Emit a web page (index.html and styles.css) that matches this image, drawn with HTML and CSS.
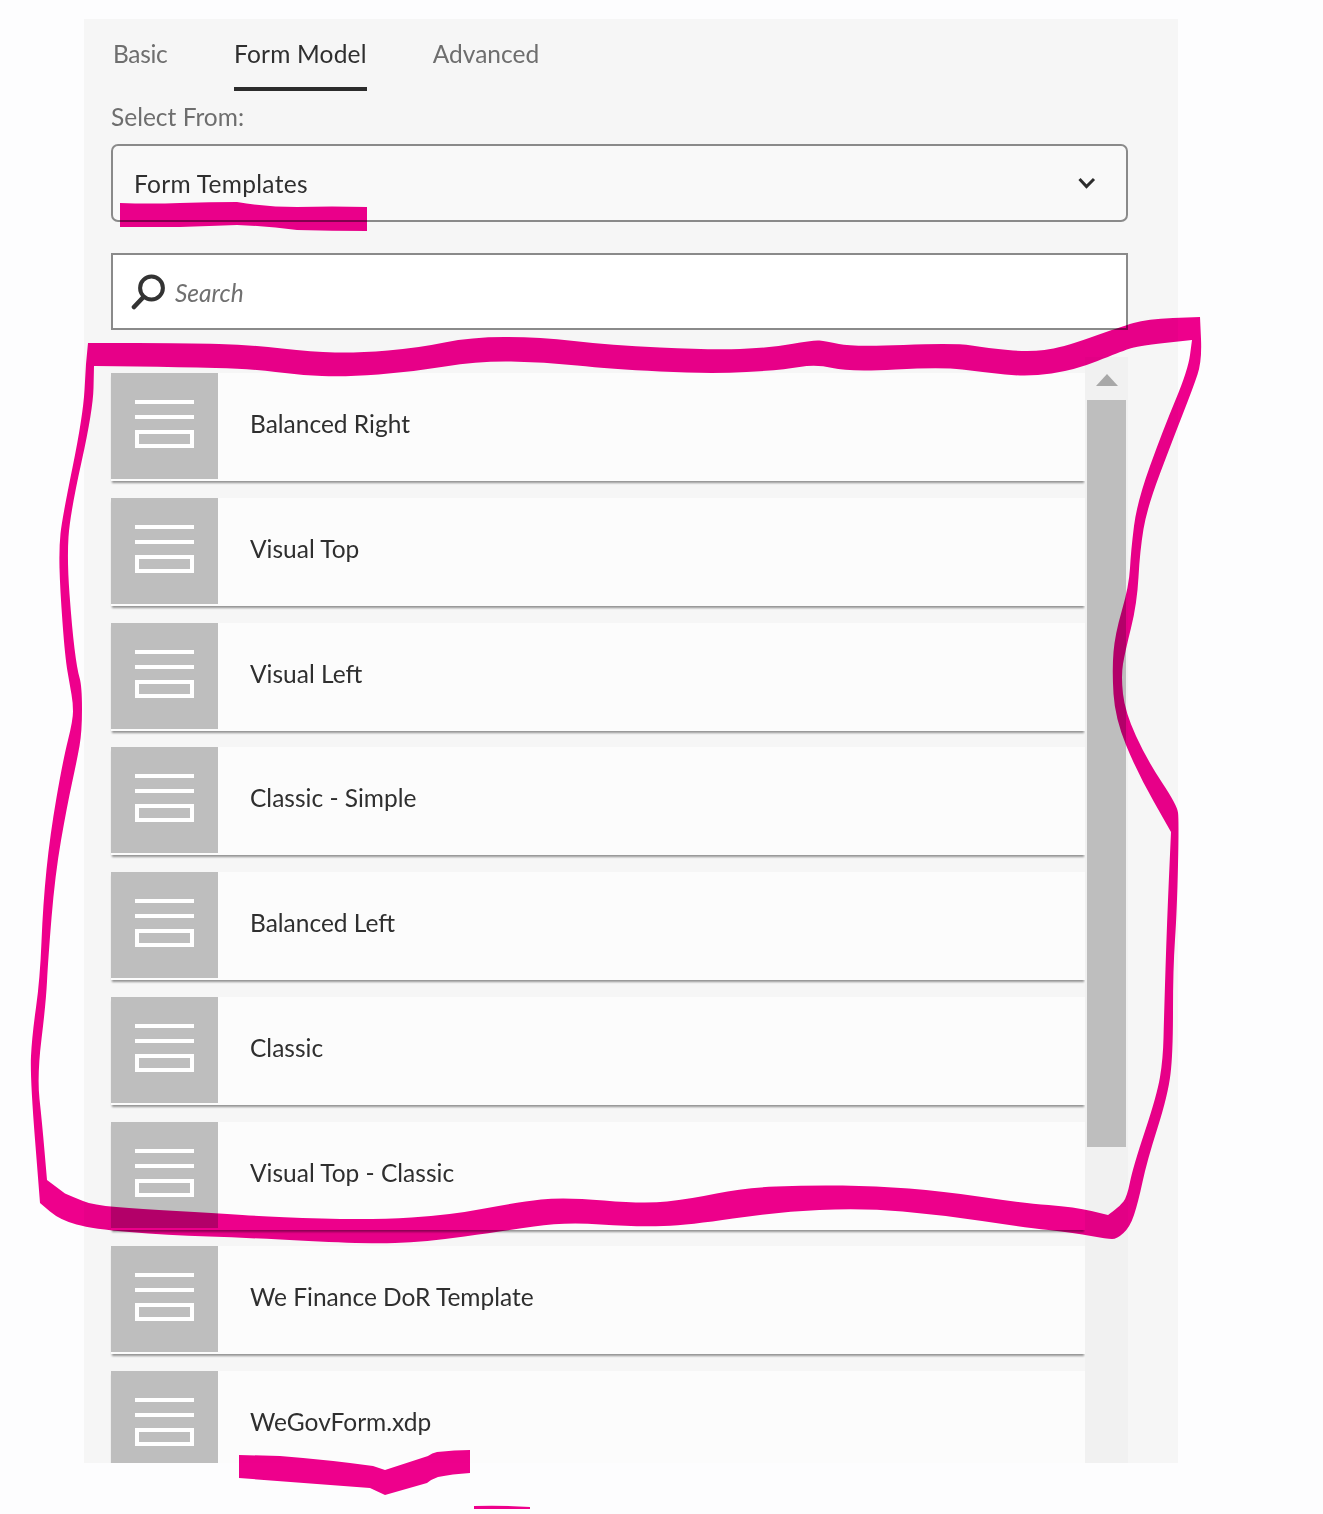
FILE: index.html
```html
<!DOCTYPE html>
<html lang="en">
<head>
<meta charset="utf-8">
<title>Form Model</title>
<link rel="stylesheet" href="styles.css">
</head>
<body>
<svg class="defs" width="0" height="0" aria-hidden="true">
  <symbol id="tpl" viewBox="0 0 107 106">
    <path d="M24 29H83M24 44H83" fill="none" stroke="#fff" stroke-width="4"/>
    <rect x="26" y="59" width="55" height="14" fill="none" stroke="#fff" stroke-width="4"/>
  </symbol>
</svg>
<main class="panel">
  <nav class="tabs">
    <span class="tab tab-basic">Basic</span>
    <span class="tab tab-active">Form Model</span>
    <span class="tab tab-adv">Advanced</span>
  </nav>
  <label class="field-label">Select From:</label>
  <div class="select">
    <span class="select-value">Form Templates</span>
    <svg class="chevron" width="18" height="12" viewBox="0 0 18 12"><path d="M1.5 2 L8.5 9.5 L16 2" fill="none" stroke="#2c2c2c" stroke-width="3"/></svg>
  </div>
  <div class="search">
    <svg class="search-icon" width="36" height="36" viewBox="0 0 36 36"><circle cx="20.5" cy="14" r="11.4" fill="none" stroke="#333" stroke-width="4"/><path d="M12 23.5 L3 33" fill="none" stroke="#333" stroke-width="4.6" stroke-linecap="round"/></svg>
    <span class="search-text">Search</span>
  </div>
  <div class="browser">
    <ul class="list">
      <li class="row"><div class="tile"><svg class="tile-icon"><use href="#tpl"/></svg></div><span class="name">Balanced Right</span></li>
      <li class="row"><div class="tile"><svg class="tile-icon"><use href="#tpl"/></svg></div><span class="name">Visual Top</span></li>
      <li class="row"><div class="tile"><svg class="tile-icon"><use href="#tpl"/></svg></div><span class="name">Visual Left</span></li>
      <li class="row"><div class="tile"><svg class="tile-icon"><use href="#tpl"/></svg></div><span class="name">Classic - Simple</span></li>
      <li class="row"><div class="tile"><svg class="tile-icon"><use href="#tpl"/></svg></div><span class="name">Balanced Left</span></li>
      <li class="row"><div class="tile"><svg class="tile-icon"><use href="#tpl"/></svg></div><span class="name">Classic</span></li>
      <li class="row"><div class="tile"><svg class="tile-icon"><use href="#tpl"/></svg></div><span class="name">Visual Top - Classic</span></li>
      <li class="row"><div class="tile"><svg class="tile-icon"><use href="#tpl"/></svg></div><span class="name">We Finance DoR Template</span></li>
      <li class="row"><div class="tile"><svg class="tile-icon"><use href="#tpl"/></svg></div><span class="name">WeGovForm.xdp</span></li>
    </ul>
    <div class="scrollbar">
      <div class="arrow"></div>
      <div class="thumb"></div>
    </div>
  </div>
</main>
<svg class="ink" width="1323" height="1514" viewBox="0 0 1323 1514" aria-hidden="true">
  <path fill="#f0008d" d="M120 203 Q150 204 180 203 Q210 202 237 202 Q267 207 297 207 Q332 206 367 207 L367 231 Q332 231 297 230 Q267 226 237 225 Q210 226 180 227 L120 227Z"/>
  <path fill="#f0008d" d="M239 1455 L280 1456 Q330 1460 373 1466 L385 1470 L428 1456 Q432 1453 437 1452 Q455 1450 470 1450 L470 1473 Q452 1474 438 1477 Q432 1479 427 1483 L385 1495 L370 1488 L239 1478Z"/>
  <path fill="#f0008d" d="M474 1506 Q500 1505 530 1507 L530 1509 L474 1509Z"/>
  <path fill="#f0008d" fill-rule="evenodd" d="M88 343 L137 343 Q186 343 219 344 Q252 345 282 348.5 Q312 352 335 352.5 Q358 353 388 350.5 Q418 348 444.5 342.5 Q471 337 504.5 337 Q538 337 574 341 Q610 345 660 347.5 Q710 350 740 349 Q770 348 791.5 344 Q813 340 819.5 340.5 Q826 341 839 344 Q852 347 903.5 345 Q955 343 971.5 345.5 Q988 348 1008 350 Q1028 352 1044.5 350 Q1061 348 1090.5 337.5 Q1120 327 1133.5 323 Q1147 319 1173 318 L1200 317 L1201 339 Q1202 361 1197.5 374.5 Q1193 388 1183 413.5 Q1173 439 1160 473.5 Q1147 508 1143.5 529 Q1140 550 1138.5 577 Q1137 604 1131 628 Q1125 652 1123 664 Q1121 676 1123 694 Q1125 712 1136 736 Q1147 760 1162 782.5 Q1177 805 1178 812.5 Q1179 820 1178 865 Q1177 910 1175 939.5 Q1173 969 1173 1011 Q1173 1053 1170.5 1074 Q1168 1095 1157.5 1128 Q1147 1161 1142.5 1182 Q1138 1203 1134 1215 Q1130 1227 1123.5 1233 Q1117 1239 1112 1239 Q1107 1239 1091 1236 Q1075 1233 1048.5 1230 Q1022 1227 982 1221 Q942 1215 902.5 1211.5 Q863 1208 819.5 1210 Q776 1212 733 1218.5 Q690 1225 663.5 1226 Q637 1227 600.5 1224.5 Q564 1222 534 1226.5 Q504 1231 464.5 1236.5 Q425 1242 395 1243 Q365 1244 308.5 1241 Q252 1238 209 1236.5 Q166 1235 129.5 1232 Q93 1229 76.5 1224.5 Q60 1220 50 1211.5 L40 1203 L35 1139.5 Q30 1076 31 1056 Q32 1036 36 1007.5 Q40 979 41.5 941.5 Q43 904 46.5 869.5 Q50 835 56.5 797.5 Q63 760 68 740 Q73 720 73 711.5 Q73 703 71.5 694.5 Q70 686 67.5 671.5 Q65 657 62.5 622.5 Q60 588 59.5 568 Q59 548 60.5 533.5 Q62 519 72.5 467.5 Q83 416 84.5 390 L86 364Z M95 366 L137 366.5 Q179 367 215.5 368 Q252 369 275.5 372 Q299 375 322 376 Q345 377 378.5 374.5 Q412 372 445 366.5 Q478 361 511 361.5 Q544 362 577 365.5 Q610 369 660 371.5 Q710 374 746.5 372 Q783 370 799.5 367 Q816 364 832.5 368 Q849 372 895.5 369.5 Q942 367 962 369.5 Q982 372 1005 374.5 Q1028 377 1051.5 373.5 Q1075 370 1097.5 361 Q1120 352 1128.5 349 Q1137 346 1164.5 343 L1192 340 L1190 355 Q1188 370 1175.5 400 Q1163 430 1150 466 Q1137 502 1134 526 Q1131 550 1130 568 Q1129 586 1122 610 Q1115 634 1113.5 652 Q1112 670 1113.5 694 Q1115 718 1126 745 Q1137 772 1154 802 L1171 832 L1169 876.5 Q1167 921 1165.5 969 Q1164 1017 1163.5 1038 Q1163 1059 1160 1077 Q1157 1095 1145 1131 Q1133 1167 1130 1182 Q1127 1197 1123.5 1201.5 Q1120 1206 1114 1210.5 L1108 1215 L1091.5 1211 Q1075 1207 1048.5 1205 Q1022 1203 982 1197 Q942 1191 909 1188.5 Q876 1186 842.5 1185.5 Q809 1185 776 1186.5 Q743 1188 716.5 1193.5 Q690 1199 667 1201.5 Q644 1204 604 1200.5 Q564 1197 541 1199.5 Q518 1202 484.5 1208.5 Q451 1215 411.5 1217.5 Q372 1220 322 1218.5 Q272 1217 242.5 1215 Q213 1213 176.5 1211 Q140 1209 116.5 1207 Q93 1205 83 1201 Q73 1197 65 1193.5 L47 1180 L44.5 1151 Q42 1122 39.5 1099 Q37 1076 41.5 1039 Q46 1002 47 981.5 Q48 961 51.5 918 Q55 875 61 840.5 Q67 806 72 783 Q77 760 79.5 746 Q82 732 82 709 Q82 686 79.5 677.5 Q77 669 74.5 648.5 Q72 628 69.5 594 Q67 560 68.5 537 Q70 514 81.5 462 Q93 410 93.5 388 L94 366Z"/>
</svg>
</body>
</html>
```
FILE: styles.css
```css
* { box-sizing: border-box; }
html, body { margin: 0; padding: 0; }
body {
  position: relative;
  height: 1514px;
  background: #fdfdfe;
  font-family: "Lato", "Liberation Sans", sans-serif;
  font-size: 24.5px;
  color: #2f2f2f;
  overflow: hidden;
}
.defs { position: absolute; }
.panel {
  margin: 0 0 0 84px;
  position: relative;
  top: 19px;
  width: 1094px;
  height: 1444px;
  background: #f6f6f6;
  overflow: hidden;
  padding: 0 50px 0 27px;
}
.tabs {
  display: flex;
  height: 72px;
  align-items: flex-start;
  padding-left: 2px;
}
.tab {
  height: 72px;
  line-height: 70px;
  color: #6e6e6e;
  white-space: nowrap;
}
.tab-basic { width: 54px; margin-right: 67px; letter-spacing: -0.3px; }
.tab-active {
  color: #2f2f2f;
  border-bottom: 4px solid #2c2c2c;
  margin-right: 66px;
  letter-spacing: 0.2px;
}
.field-label {
  display: block;
  height: 53px;
  line-height: 52px;
  color: #6e6e6e;
}
.select {
  height: 78px;
  border: 2px solid #8a8a8a;
  border-radius: 7px;
  background: #f9f9f9;
  display: flex;
  align-items: center;
  justify-content: space-between;
  padding: 0 30px 0 21px;
}
.select-value { letter-spacing: 0.3px; }
.chevron { margin-top: -1px; }
.search {
  height: 77px;
  margin-top: 31px;
  border: 2px solid #8a8a8a;
  background: #fff;
  display: flex;
  align-items: center;
  gap: 8px;
  padding: 0 0 0 18px;
  color: #707070;
  font-style: italic;
}
.search-text { padding-top: 2px; }
.browser {
  display: flex;
  margin-top: 27px;
  align-items: flex-start;
}
.list {
  list-style: none;
  margin: 0;
  padding: 16px 0 0;
  width: 974px;
  display: flex;
  flex-direction: column;
  gap: 16.75px;
}
.row {
  height: 108px;
  background: #fcfcfc;
  display: flex;
  align-items: flex-start;
  box-shadow: 0 3px 2px -1px rgba(0, 0, 0, 0.4);
}
.tile {
  width: 107px;
  height: 106px;
  flex: none;
  background: #bebebe;
}
.tile-icon { display: block; width: 107px; height: 106px; }
.name {
  margin-left: 32px;
  line-height: 102px;
  white-space: nowrap;
}
.scrollbar {
  width: 43px;
  height: 1120px;
  background: #f1f1f1;
  padding: 17px 2px 0;
  flex: none;
  position: relative;
}
.arrow {
  width: 0;
  height: 0;
  margin: 0 auto;
  border-left: 11px solid transparent;
  border-right: 11px solid transparent;
  border-bottom: 12px solid #a8a8a8;
}
.thumb {
  margin-top: 14px;
  width: 39px;
  height: 747px;
  background: #bebebe;
}
.ink {
  position: absolute;
  left: 0;
  top: 0;
  pointer-events: none;
  mix-blend-mode: multiply;
}
```
